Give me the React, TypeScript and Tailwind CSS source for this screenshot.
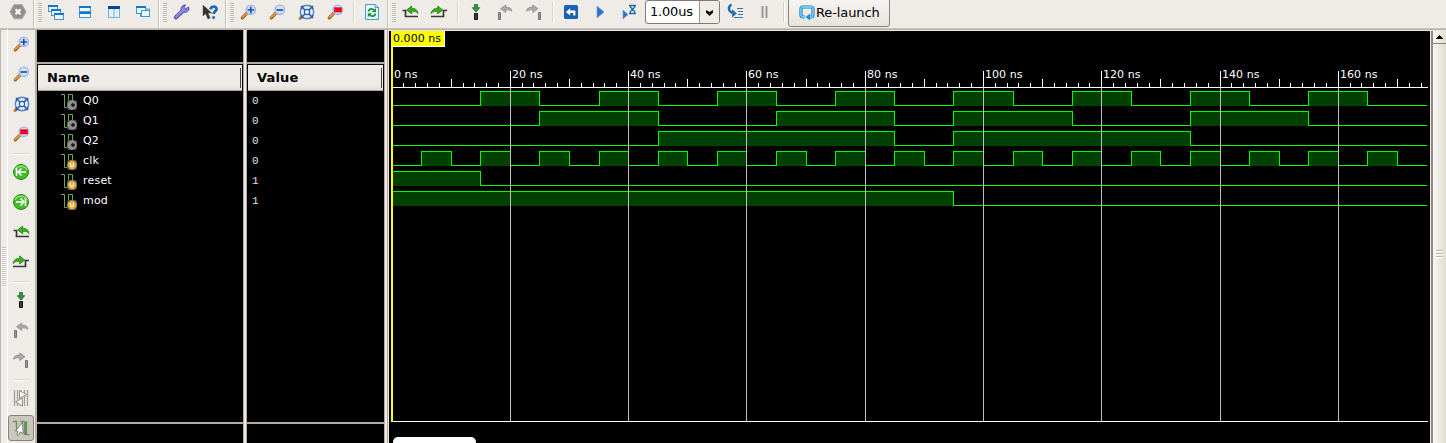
import type { ReactNode } from "react";

const NS = 5.914;
const px = (t: number) => Math.floor(t * NS + 1.05);

const signals = [
  { name: "Q0", value: "0", high: [[15, 25], [35, 45], [55, 65], [75, 85], [95, 105], [115, 125], [135, 145], [155, 165]] },
  { name: "Q1", value: "0", high: [[25, 45], [65, 85], [95, 115], [135, 155]] },
  { name: "Q2", value: "0", high: [[45, 85], [95, 135]] },
  { name: "clk", value: "0", high: Array.from({ length: 17 }, (_, i) => [5 + i * 10, 10 + i * 10]) },
  { name: "reset", value: "1", high: [[0, 15]] },
  { name: "mod", value: "1", high: [[0, 95]] },
];

function Icon({ children }: { children: ReactNode }) {
  return (
    <svg width="21" height="24" viewBox="0 0 21 24" className="block shrink-0" fill="none">
      {children}
    </svg>
  );
}

function Lens({ children }: { children?: ReactNode }) {
  return (
    <Icon>
      <path d="M8.5 13.5L4.3 17.8" stroke="#8a5a1c" strokeWidth="3.2" strokeLinecap="round" />
      <path d="M8.5 13.3L4.3 17.4" stroke="#e69a3c" strokeWidth="1.8" strokeLinecap="round" />
      <circle cx="12.8" cy="9.8" r="4.7" fill="#cfe4fc" stroke="#a3b1ea" strokeWidth="1.3" />
      {children}
    </Icon>
  );
}
const ZoomIn = () => <Lens><path d="M9.5 10h6.6M12.8 6.7v6.6" stroke="#1f529c" strokeWidth="1.7" /></Lens>;
const ZoomOut = () => <Lens><path d="M9.5 10h6.6" stroke="#1f529c" strokeWidth="1.7" /></Lens>;
const ZoomArea = () => <Lens><path d="M9.2 7.3h7.6v5H9.2z" fill="#f0001c" /></Lens>;
const ZoomFit = () => (
  <Icon>
    <path d="M6 16.5L4 18.5" stroke="#c87922" strokeWidth="3" strokeLinecap="round" />
    <circle cx="11" cy="12" r="6.7" fill="#dcecff" stroke="#5f83cc" strokeWidth="1.4" />
    <path d="M6.2 7.2l9.6 9.6M15.8 7.2l-9.6 9.6" stroke="#2a57a8" strokeWidth="1.5" />
    <path d="M5.3 9.2V6.3h3M13.7 6.3h3v2.9M16.7 14.8v2.9h-3M8.3 17.7h-3v-2.9" stroke="#2a57a8" strokeWidth="1.1" />
    <circle cx="11" cy="12" r="2.6" fill="#eef8ff" stroke="#2c5ca8" strokeWidth="1.1" />
  </Icon>
);

const PrevEdge = () => (
  <Icon>
    <path d="M2.5 10.5h3v6H18" stroke="#383838" strokeWidth="1.7" />
    <path d="M6.5 10l5.2-4v2.4c3.7-.2 6 1.5 6.3 5.2-1.7-2-3.5-2.5-6.3-2.2v2.5z" fill="#35b315" stroke="#18770b" strokeWidth=".7" />
  </Icon>
);
const NextEdge = () => (
  <Icon>
    <path d="M2 16.5h12.5v-6h3.5" stroke="#383838" strokeWidth="1.7" />
    <path d="M13.8 10L8.6 6v2.4C5 8.2 2.4 10 2 13.6c1.8-2 3.8-2.5 6.6-2.2v2.5z" fill="#35b315" stroke="#18770b" strokeWidth=".7" />
  </Icon>
);
const AddMarker = () => (
  <Icon>
    <path d="M8.5 4.5h3v3.2h2.2L10 12 6.3 7.7h2.2z" fill="#31993b" stroke="#17681f" strokeWidth=".8" />
    <path d="M8.5 13.5h3v6h-3z" fill="#414141" stroke="#111" />
  </Icon>
);
const PrevMarker = () => (
  <Icon>
    <path d="M3.5 12.5h2v7h-2z" fill="#999" stroke="#747474" />
    <path d="M5.5 8.7L10.7 5v2c3.8 0 6 1.3 6.3 4.2-2-1.3-3.7-1.5-6.3-1.3v2.6z" fill="#aaa" stroke="#858585" strokeWidth=".7" />
  </Icon>
);
const NextMarker = () => (
  <Icon>
    <path d="M14.5 12.5h2v7h-2z" fill="#999" stroke="#747474" />
    <path d="M14 8.7L8.8 5v2C5 7 2.8 8.3 2.5 11.2c2-1.3 3.7-1.5 6.3-1.3v2.6z" fill="#aaa" stroke="#858585" strokeWidth=".7" />
  </Icon>
);

const Stop = () => (
  <Icon>
    <path d="M6 4.5h8l4 7.3-4 7H6l-4-7z" fill="#909090" stroke="#aaa" strokeWidth="1" />
    <path d="M7.5 9.3l5 5m0-5l-5 5" stroke="#fff" strokeWidth="2.2" />
  </Icon>
);
const Win = ({ x, y, w, h }: { x: number; y: number; w: number; h: number }) => (
  <g>
    <rect x={x + 0.5} y={y + 0.5} width={w - 1} height={h - 1} fill="#eff7fc" stroke="#4096d4" />
    <path d={`M${x} ${y + 1}h${w}`} stroke="#1177d2" strokeWidth="2" />
  </g>
);
const Cascade = () => <Icon><Win x={2} y={5} w={10} h={7} /><Win x={5} y={9} w={10} h={7} /><Win x={8} y={13} w={10} h={7} /></Icon>;
const TileH = () => <Icon><Win x={4} y={6} w={12} h={6} /><Win x={4} y={12} w={12} h={6} /></Icon>;
const TileV = () => (
  <Icon>
    <path d="M4.5 6.5h11v11h-11zM10 7v11" fill="#e3f1fa" stroke="#73b4dd" />
    <path d="M4 7.5h12" stroke="#06439d" strokeWidth="3" />
  </Icon>
);
const Layers = () => (
  <Icon>
    <Win x={3} y={6} w={10} h={8} />
    <path d="M13 9h3.5v7.5h-9V14" stroke="#3b9ce2" />
    <rect x="8.5" y="10.5" width="8" height="6" fill="#eff7fc" stroke="#4096d4" />
  </Icon>
);
const Wrench = () => (
  <Icon>
    <path d="M5 17.3l6.5-6" stroke="#514eaa" strokeWidth="4.2" strokeLinecap="round" />
    <path d="M13.5 5c-3.4.6-4.4 4-2.6 6.2 2.2 2.2 6 1.2 7-2.2l-.3-2-3 1.8-1.8-1.6 1.9-2.2z" fill="#8480df" stroke="#514eaa" strokeWidth="1" />
    <path d="M5.2 17l7-6.6" stroke="#908ce6" strokeWidth="2.2" strokeLinecap="round" />
  </Icon>
);
const Help = () => (
  <Icon>
    <path d="M3 5v11l2.7-2.3 2.2 5.3 2.4-1-2.3-5h3.7z" fill="#333" stroke="#555" strokeWidth=".5" />
    <path d="M10.6 9.5c-.2-3.5 6-3.7 6-.6 0 2.4-3 2.3-3 5.2M13.6 16.2v2.6" stroke="#1668bf" strokeWidth="2.7" />
  </Icon>
);
const Refresh = () => (
  <Icon>
    <path d="M3.5 4.5h9.5l3.5 3v12h-13z" fill="#e3f5ff" stroke="#4e9bd3" />
    <path d="M13 4.5v3h3.5" stroke="#4e9bd3" />
    <path d="M6.5 11.5c.5-3 4-3.3 5.5-1.3M13.5 13.5c-.5 3-4 3.3-5.7 1.4" stroke="#15952e" strokeWidth="1.8" />
    <path d="M14 8v4h-4zM5.8 17.3v-4h4z" fill="#15952e" />
  </Icon>
);
const Restart = () => (
  <Icon>
    <rect x="3" y="5" width="14" height="14" rx="1.5" fill="#1761b8" />
    <path d="M4.8 12l4.4-3.7v2.3h5.2v5h-2.2V13h-3v2.6z" fill="#fff" />
  </Icon>
);
const Run = () => (
  <Icon>
    <path d="M7 6l7 6-7 6z" fill="#2c70ca" stroke="#72a1dc" strokeWidth=".7" />
  </Icon>
);
const RunFor = () => (
  <Icon>
    <path d="M4 10l5 4.5-5 4.5z" fill="#2c70ca" stroke="#72a1dc" strokeWidth=".7" />
    <path d="M10 5.5h7M10 13.5h7M11 6c0 2 5 4.5 5 7M16 6c0 2-5 4.5-5 7" stroke="#176bad" strokeWidth="1.4" />
  </Icon>
);
const Step = () => (
  <Icon>
    <path d="M5.5 4.5C1.5 7 2 11.8 8 13.3" stroke="#1f6bb0" strokeWidth="2.4" />
    <path d="M6 9.3l5 4.2-5 4z" fill="#2872ba" />
    <path d="M11 8.5h6M12 11.5h5M12 14.5h5M8 17.5h9" stroke="#3973b4" strokeWidth="1.2" />
  </Icon>
);
const Pause = () => (
  <Icon>
    <path d="M7.5 6v12M11.5 6v12" stroke="#999" strokeWidth="2" />
  </Icon>
);
const Goto = ({ end = false }: { end?: boolean }) => (
  <Icon>
    <circle cx="10" cy="12" r="7.5" fill="#43bd27" stroke="#278a16" />
    <path d="M4 10c2-5 10-5 12 0" stroke="#8de06c" strokeWidth="1.5" />
    {end ? (
      <path d="M5 12h8M9.5 8.5L13 12l-3.5 3.5M14.5 8v8" stroke="#fff" strokeWidth="1.5" />
    ) : (
      <path d="M15 12H7M10.5 8.5L7 12l3.5 3.5M5.5 8v8" stroke="#fff" strokeWidth="1.5" />
    )}
  </Icon>
);
const Swap = () => (
  <Icon>
    <path d="M3.5 4v16M6.5 4v16M13.5 4v16M16.5 4v16M9.5 4v16" stroke="#a2a09c" strokeWidth="1.3" />
    <path d="M8.5 4.5l7 4-7 4zM11.5 12l-7 4 7 4z" fill="#f4f3f0" stroke="#8c8a86" strokeWidth=".9" />
  </Icon>
);
const Snap = () => (
  <Icon>
    <path d="M2 5.5h4M5.5 5v9M9 5.5h4M13.5 5v14M15.5 5v13.5h3" stroke="#659b51" strokeWidth="1.3" />
    <path d="M14.5 6v13" stroke="#777" />
    <path d="M11.5 6.5L4.5 15l2.4.2-1 3.8 1.8.4 1.5-3.4 3 1.5z" fill="#fff" stroke="#555" strokeWidth=".7" />
  </Icon>
);
const SignalIcon = ({ input }: { input: boolean }) => (
  <svg width="18" height="17" viewBox="0 0 18 17" className="block shrink-0" fill="none">
    <path d="M0 1.5h3.5v13h4V1.5h4v6" stroke="#67a94c" />
    <rect x="6" y="7" width="10" height="10" rx="2" fill="#4a4a4a" />
    <circle cx="11" cy="12" r="4.2" fill={input ? "#e5a51e" : "#8b8b8b"} stroke={input ? "#e8c684" : "#b0b0b0"} strokeWidth=".6" />
    {input ? (
      <path d="M9.3 9.7v2.5c0 1.7 3.2 1.7 3.2 0V9.7M11 12.5v2" stroke="#fff" strokeWidth="1.1" />
    ) : (
      <path d="M10 12h4M12 10v4" stroke="#111" strokeWidth="1.3" />
    )}
  </svg>
);

const Cell = ({ children }: { children: ReactNode }) => <div className="w-[29px] shrink-0 pl-1">{children}</div>;
const Grip = () => (
  <div className="flex h-7 w-[9px] shrink-0 gap-0.5">
    <div className="h-7 w-0.5 border-l border-[#c5c2bc] bg-white" />
    <div className="ml-px mt-[3px] h-[19px] w-1 bg-[repeating-linear-gradient(to_bottom,#b9b6b0_0_1px,#faf9f7_1px_2px)]" />
  </div>
);
const Divider = () => (
  <div className="flex w-2 shrink-0 justify-center pr-px pt-0.5">
    <div className="h-5 w-0.5 border-l border-[#d5d2cc] bg-white" />
  </div>
);
const SideCell = ({ children }: { children: ReactNode }) => <div className="h-[30px] shrink-0 pl-[3px] pt-[3px]">{children}</div>;
const SideDivider = () => (
  <div className="flex h-2 shrink-0 flex-col justify-center pl-1.5 pt-0.5">
    <div className="h-0.5 w-[15px] border-t border-[#d8d5cf] bg-white" />
  </div>
);

function Toolbar() {
  return (
    <div className="flex h-7 shrink-0 pl-1">
      <Cell><Stop /></Cell>
      <Grip />
      <Cell><Cascade /></Cell><Cell><TileH /></Cell><Cell><TileV /></Cell><Cell><Layers /></Cell>
      <Grip />
      <Cell><Wrench /></Cell><Cell><Help /></Cell>
      <Grip />
      <Cell><ZoomIn /></Cell><Cell><ZoomOut /></Cell><Cell><ZoomFit /></Cell><Cell><ZoomArea /></Cell>
      <Divider />
      <Cell><Refresh /></Cell>
      <Grip />
      <Cell><PrevEdge /></Cell><Cell><NextEdge /></Cell>
      <Divider />
      <Cell><AddMarker /></Cell><Cell><PrevMarker /></Cell><Cell><NextMarker /></Cell>
      <Divider />
      <Cell><Restart /></Cell><Cell><Run /></Cell><Cell><RunFor /></Cell>
      <div className="ml-px mr-0.5 flex h-6 w-[75px] shrink-0 rounded-[3px] border border-[#827b73] bg-white">
        <span className="w-[53px] pl-1 text-[13px] leading-[22px] tracking-[-0.2px]">1.00us</span>
        <span className="flex flex-1 items-center justify-center rounded-r-sm border-l border-[#9b948b] bg-[#efece7]">
          <svg width="11" height="8" viewBox="0 0 11 8" className="mt-0.5"><path d="M2 1l3.5 2L9 1v2.5L5.5 7 2 3.5z" fill="#000" /></svg>
        </span>
      </div>
      <Cell><Step /></Cell><Cell><Pause /></Cell>
      <Divider />
      <button className="-mt-0.5 flex h-[29px] w-[102px] shrink-0 items-center rounded-[3px] border border-[#8a837b] bg-gradient-to-b from-[#f7f5f2] to-[#e8e4de] pl-[10px] text-[13px] tracking-[-0.1px]">
        <svg width="17" height="17" viewBox="0 0 17 17" fill="none">
          <path d="M6 13H4a2 2 0 01-2-2V5a2 2 0 012-2h8a2 2 0 012 2v6a2 2 0 01-2 2h-1" stroke="#1777bd" strokeWidth="3.2" />
          <path d="M6 13H4a2 2 0 01-2-2V5a2 2 0 012-2h8a2 2 0 012 2v6a2 2 0 01-2 2h-1" stroke="#71c7f7" strokeWidth="1.8" />
          <path d="M11 9.5v7L6.5 13z" fill="#268cd1" />
        </svg>
        Re-launch
      </button>
    </div>
  );
}

function SideToolbar() {
  return (
    <div className="flex w-[37px] shrink-0 bg-[#efece7]">
      <div className="flex w-[7px] flex-col border-l border-[#bbb7b0]">
        <div className="mt-[217px] ml-px h-10 w-1 bg-[repeating-linear-gradient(to_bottom,#c5c2bd_0_1px,#fff_1px_2px)]" />
      </div>
      <div className="-mt-px flex w-7 flex-col border-l border-white pr-px">
        <SideCell><ZoomIn /></SideCell><SideCell><ZoomOut /></SideCell><SideCell><ZoomFit /></SideCell><SideCell><ZoomArea /></SideCell>
        <SideDivider />
        <SideCell><Goto /></SideCell><SideCell><Goto end /></SideCell><SideCell><PrevEdge /></SideCell><SideCell><NextEdge /></SideCell>
        <SideDivider />
        <SideCell><AddMarker /></SideCell><SideCell><PrevMarker /></SideCell><SideCell><NextMarker /></SideCell>
        <SideDivider />
        <SideCell><Swap /></SideCell>
        <div className="mt-0.5 h-[26px] w-[26px] rounded-[3px] border border-[#878078] bg-[#cbc6be] pl-0.5"><Snap /></div>
      </div>
      <div className="w-0.5 bg-[#b5afa7]" />
    </div>
  );
}

function Panel({ title, children }: { title: string; children: ReactNode }) {
  return (
    <div className="flex h-full w-full flex-col bg-black text-white">
      <div className="h-8 shrink-0" />
      <div className="h-0.5 shrink-0 bg-[#b0aaa0]" />
      <div className="mt-px mr-px ml-px flex h-[26px] shrink-0 items-center justify-between border-b border-[#b0a79c] bg-[linear-gradient(to_bottom,#efece7_80%,#e2ddd4)] pl-[9px] text-[13px] font-bold tracking-[0.15px] text-black">
        {title}
        <div className="mr-px h-5 w-px bg-[#444]" />
      </div>
      <div className="h-[331px] shrink-0">{children}</div>
      <div className="h-0.5 shrink-0 bg-[#b0aaa0]" />
    </div>
  );
}

function Waves() {
  const ticks = Array.from({ length: 88 }, (_, i) => i * 2);
  return (
    <div className="relative h-full w-[1041px] shrink-0 overflow-hidden bg-black">
      <svg width="1037" height="391" viewBox="0 0 1037 391" className="ml-0.5 block font-['DejaVu_Sans',sans-serif]" shapeRendering="crispEdges">
        {signals.map((s, i) => {
          const top = 60 + i * 20;
          let d = `M0.5 ${top + 14.5}`;
          s.high.forEach(([a, b]) => {
            d += `H${px(a) + 0.5}V${top + 0.5}H${px(b) + 0.5}V${top + 14.5}`;
          });
          d += "H1036";
          return (
            <g key={s.name}>
              <path d={d} fill="none" stroke="#00ff00" />
              {s.high.map(([a, b]) => (
                <rect key={a} x={px(a) + 1} y={top + 1} width={px(b) - px(a) - 1} height="14" fill="#004000" />
              ))}
            </g>
          );
        })}
        {ticks.map((t) => {
          const x = px(t);
          if (t % 20 === 0) {
            return (
              <g key={t}>
                {t > 0 && <rect x={x} y="57" width="1" height="333" fill="#bebebe" />}
                <rect x={x} y="40" width="1" height="17" fill="#fff" />
                <text x={x + 2} y="47" fill="#fff" fontSize="11" letterSpacing="0.05">{t} ns</text>
              </g>
            );
          }
          return <rect key={t} x={x} y={t % 10 === 0 ? 48 : 52} width="1" height={t % 10 === 0 ? 8 : 4} fill="#fff" />;
        })}
        <path d="M0 56.5H1037M0 390.5H1037" stroke="#fff" />
        <rect width="2" height="390" fill="#ff0" />
      </svg>
      <div className="absolute left-0.5 top-0 h-4 w-[54px] whitespace-nowrap border-r border-b border-white bg-[#ff0] pl-0.5 pt-px text-[11px] leading-[14px] tracking-[0.05px] text-black">0.000 ns</div>
      <div className="absolute left-1 top-[406px] h-5 w-[83px] rounded-[5px] bg-white" />
    </div>
  );
}

const Splitter = () => <div className="w-1 shrink-0 border-x border-[#b0aaa0] bg-[#efece7]" />;

export default function App() {
  return (
    <div className="flex h-[443px] w-[1446px] flex-col overflow-hidden bg-[#efece7] font-['DejaVu_Sans',sans-serif] text-black">
      <Toolbar />
      <div className="h-0.5 shrink-0 border-t border-[#c5c1bb] bg-[#b9b5ae]" />
      <div className="flex h-[413px] shrink-0">
        <SideToolbar />
        <div className="w-[206px] shrink-0">
          <Panel title="Name">
            {signals.map((s, i) => (
              <div key={s.name} className="flex h-5 items-center pl-6 text-[11px] tracking-[0.2px]">
                <SignalIcon input={i > 2} />
                <span className="pl-1 pt-px">{s.name}</span>
              </div>
            ))}
          </Panel>
        </div>
        <Splitter />
        <div className="w-[137px] shrink-0">
          <Panel title="Value">
            {signals.map((s) => (
              <div key={s.name} className="h-5 pl-[5px] font-['Liberation_Mono',monospace] text-[11px] leading-5 text-[#e0e0e0]">{s.value}</div>
            ))}
          </Panel>
        </div>
        <div className="flex w-[5px] shrink-0 border-l border-[#b0aaa0] bg-[#efece7] pl-0.5">
          <div className="w-px bg-[#aaa59d]" />
        </div>
        <div className="flex flex-1 flex-col border-t border-[#e8e5df]">
          <div className="flex flex-1">
            <Waves />
            <div className="w-[3px] shrink-0 border-l border-[#efece7] bg-[#8f8981]" />
            <div className="flex flex-1 flex-col bg-gradient-to-r from-[#f8f6f3] to-[#e0ddd3]">
              <div className="flex h-[13px] items-center justify-center border-b border-[#857e76]">
                <svg width="7" height="4" viewBox="0 0 7 4" shapeRendering="crispEdges"><path d="M3.5 0L7 4H0z" fill="#000" /></svg>
              </div>
              <div className="mt-[206px] ml-[3px] h-2 w-[7px] bg-[repeating-linear-gradient(to_bottom,#bcb5ae_0_1px,#fff_1px_2px,transparent_2px_3px)]" />
            </div>
          </div>
        </div>
      </div>
    </div>
  );
}
